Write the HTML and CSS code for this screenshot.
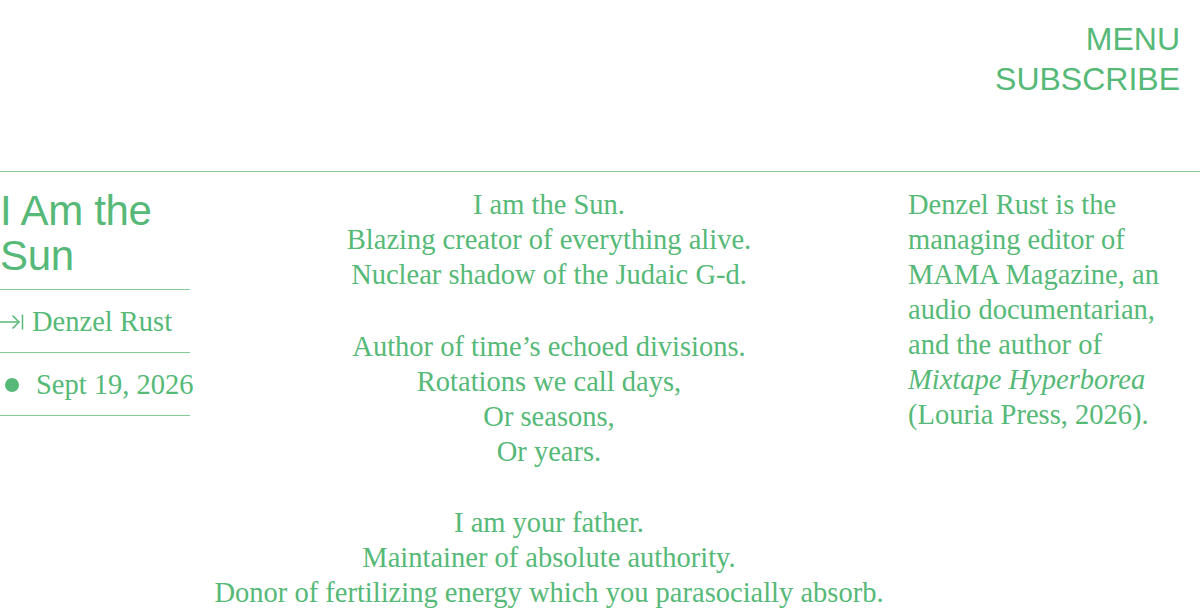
FILE: index.html
```html
<!DOCTYPE html>
<html>
<head>
<meta charset="utf-8">
<link rel="stylesheet" href="styles.css">
</head>
<body>
<header class="top">
  <nav class="nav">
    <a class="nav-link">MENU</a>
    <a class="nav-link">SUBSCRIBE</a>
  </nav>
</header>
<main class="article">
  <aside class="meta">
    <h1 class="title">I Am the<br>Sun</h1>
    <div class="meta-row author">
      <svg class="arrow" width="24" height="18" viewBox="0 0 24 18" fill="none" stroke="currentColor" stroke-width="1.5">
        <path d="M0 9 H19"/>
        <path d="M12.5 2.5 L19 9 L12.5 15.5"/>
        <path d="M22.5 1.5 V16.5"/>
      </svg>
      <span>Denzel Rust</span>
    </div>
    <div class="meta-row date">
      <span class="dot"></span>
      <span>Sept 19, 2026</span>
    </div>
  </aside>
  <section class="poem">
    <p>I am the Sun.<br>Blazing creator of everything alive.<br>Nuclear shadow of the Judaic G-d.</p>
    <p>Author of time’s echoed divisions.<br>Rotations we call days,<br>Or seasons,<br>Or years.</p>
    <p>I am your father.<br>Maintainer of absolute authority.<br>Donor of fertilizing energy which you parasocially absorb.</p>
  </section>
  <aside class="bio">
    <p>Denzel Rust is the<br>managing editor of<br>MAMA Magazine, an<br>audio documentarian,<br>and the author of<br><em>Mixtape Hyperborea</em><br>(Louria Press, 2026).</p>
  </aside>
</main>
</body>
</html>
```

FILE: styles.css
```css
html, body {
  margin: 0;
  padding: 0;
  background: #ffffff;
}
body {
  color: #56b977;
  font-family: "Liberation Serif", "Times New Roman", serif;
  overflow: hidden;
}
.top {
  box-sizing: border-box;
  height: 172px;
  padding: 19px 20px 0 0;
  border-bottom: 1px solid #86cc98;
}
.nav {
  display: flex;
  flex-direction: column;
  align-items: flex-end;
}
.nav-link {
  font-family: "Liberation Sans", Arial, sans-serif;
  font-size: 32px;
  line-height: 40px;
  color: #56b977;
  text-decoration: none;
}
.article {
  display: grid;
  grid-template-columns: 190px 718px 292px;
}
.meta {
  padding-top: 16px;
}
.title {
  margin: 0;
  font-family: "Liberation Sans", Arial, sans-serif;
  font-weight: normal;
  font-size: 42px;
  line-height: 45px;
  letter-spacing: -0.3px;
  padding-bottom: 11px;
  border-bottom: 1px solid #86cc98;
}
.meta-row {
  display: flex;
  align-items: center;
  font-size: 28.5px;
  line-height: 35px;
  padding: 14px 0 13px;
  border-bottom: 1px solid #86cc98;
  white-space: nowrap;
}
.arrow {
  flex: none;
  margin-right: 8px;
}
.dot {
  flex: none;
  width: 14px;
  height: 14px;
  border-radius: 50%;
  background: #56b977;
  margin: 0 17px 0 5px;
}
.poem {
  text-align: center;
  font-size: 28.5px;
  line-height: 35px;
  padding-top: 15px;
  white-space: nowrap;
}
.poem p {
  margin: 0 0 36.5px;
}
.poem p:last-child {
  margin-bottom: 0;
}
.bio {
  font-size: 28.5px;
  line-height: 35px;
  padding-top: 15px;
  white-space: nowrap;
}
.bio p {
  margin: 0;
}
.bio em {
  font-style: italic;
}
```
